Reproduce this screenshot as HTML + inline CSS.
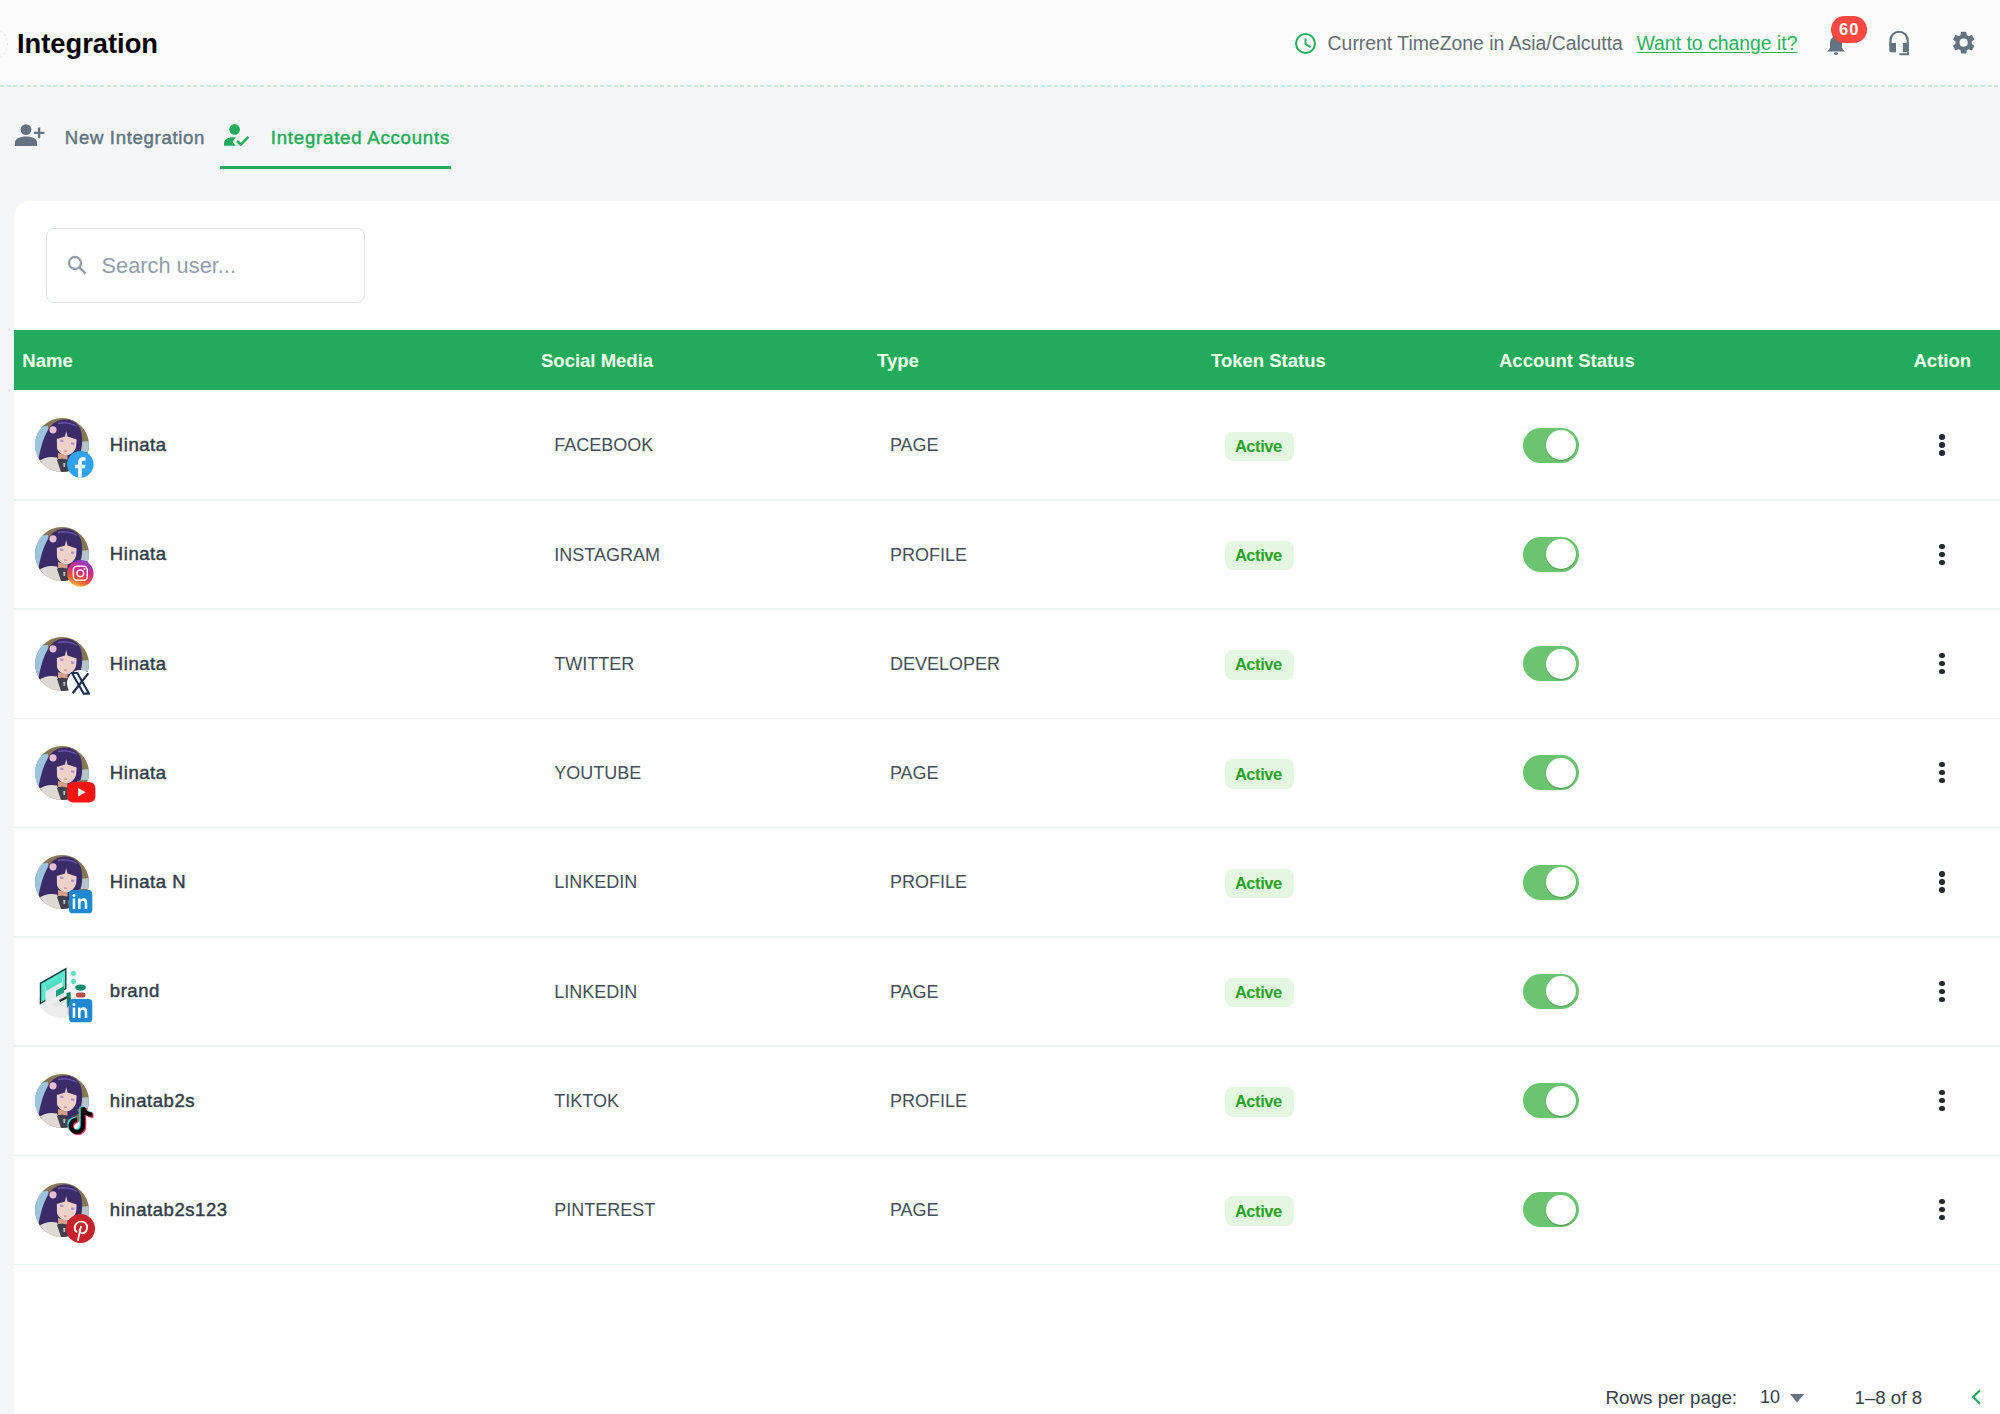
<!DOCTYPE html>
<html><head><meta charset="utf-8"><title>Integration</title>
<style>
html,body{margin:0;padding:0;}
body{width:2000px;height:1414px;overflow:hidden;position:relative;background:#f4f6f8;font-family:"Liberation Sans",sans-serif;}
.t{position:absolute;white-space:nowrap;}
.abs{position:absolute;}
svg{position:absolute;overflow:visible;}
</style></head><body>
<div class="abs" style="left:0;top:0;width:2000px;height:86px;background:#fcfcfd;"></div>
<div class="abs" style="left:0;top:85px;width:2000px;height:1.5px;background:repeating-linear-gradient(90deg,#c9ead5 0 4px,transparent 4px 6.67px);"></div>
<div class="abs" style="left:0;top:87px;width:2000px;height:1px;background:#f8f9fa;"></div>
<div class="abs" style="left:-26px;top:27px;width:32px;height:32px;border:1px dashed #e6e9ec;border-radius:50%;"></div>
<div class="t" style="left:17.00px;top:29.59px;font-size:27.3px;line-height:27.3px;font-weight:700;color:#000;">Integration</div>
<svg style="left:1295px;top:33px" width="21" height="21" viewBox="0 0 20 20"><circle cx="10" cy="10" r="9" fill="none" stroke="#2bb062" stroke-width="2"/><path d="M10 5.2V10.6L15 13.4" fill="none" stroke="#2bb062" stroke-width="1.9"/></svg>
<div class="t" style="left:1327.60px;top:33.58px;font-size:19.4px;line-height:19.4px;font-weight:400;color:#666d73;">Current TimeZone in Asia/Calcutta</div>
<div class="t" style="left:1636.50px;top:33.58px;font-size:19.4px;line-height:19.4px;font-weight:400;color:#2bb062;text-decoration:underline;text-underline-offset:2px;">Want to change it?</div>
<svg style="left:1825px;top:35px" width="22" height="21" viewBox="0 0 22 21"><path d="M11 1.5C7.4 1.5 5 4.2 5 7.8V13L2.2 16.6H19.8L17 13V7.8C17 4.2 14.6 1.5 11 1.5Z" fill="#637381"/><ellipse cx="11" cy="18.6" rx="2.2" ry="1.4" fill="#637381"/></svg>
<div class="abs" style="left:1830.8px;top:16px;width:36.7px;height:27px;border-radius:14px;background:#ff4842;"></div>
<div class="t" style="left:1839.00px;top:21.03px;font-size:16.5px;line-height:16.5px;font-weight:700;color:#fff;letter-spacing:1px;">60</div>
<svg style="left:1885px;top:28px" width="30" height="30" viewBox="0 0 30 30"><path d="M5.4 16.5V12.4A8.65 8.65 0 0 1 22.7 12.4V16.5" fill="none" stroke="#637381" stroke-width="2.2"/><path d="M4.3 15H11V24.3H6C5 24.3 4.3 23.6 4.3 22.6Z" fill="#637381"/><path d="M17.9 15H24V22.8C24 23.7 23.4 24.3 22.5 24.3H17.9Z" fill="#637381"/><path d="M23.1 24V26.2H14.4" fill="none" stroke="#637381" stroke-width="1.9"/></svg>
<svg style="left:1949.95px;top:29.4px" width="27.3" height="27.3" viewBox="0 0 24 24"><path fill="#637381" d="M19.14 12.94c.04-.3.06-.61.06-.94 0-.32-.02-.64-.07-.94l2.03-1.58a.49.49 0 0 0 .12-.61l-1.92-3.32a.49.49 0 0 0-.59-.22l-2.39.96c-.5-.38-1.03-.7-1.62-.94l-.36-2.54a.48.48 0 0 0-.48-.41h-3.84c-.24 0-.43.17-.47.41l-.36 2.54c-.59.24-1.13.57-1.62.94l-2.39-.96a.48.48 0 0 0-.59.22L2.74 8.87c-.12.21-.08.47.12.61l2.03 1.58c-.05.3-.09.63-.09.94s.02.64.07.94l-2.03 1.58a.49.49 0 0 0-.12.61l1.92 3.32c.12.22.37.29.59.22l2.39-.96c.5.38 1.03.7 1.62.94l.36 2.54c.05.24.24.41.48.41h3.84c.24 0 .44-.17.47-.41l.36-2.54c.59-.24 1.13-.56 1.62-.94l2.39.96c.22.08.47 0 .59-.22l1.92-3.32c.12-.22.07-.47-.12-.61l-2.01-1.58zM12 15.6A3.6 3.6 0 1 1 12 8.4a3.6 3.6 0 0 1 0 7.2z"/></svg>
<svg style="left:15px;top:123.5px" width="31" height="22" viewBox="0 0 31 22"><circle cx="11" cy="5.6" r="5.4" fill="#637381"/><path d="M0 22V18.5C0 14.8 4.5 12.6 11 12.6S22 14.8 22 18.5V22Z" fill="#637381"/><path d="M24.1 3.6V14M18.9 8.9H29.4" stroke="#637381" stroke-width="2.3"/></svg>
<div class="t" style="left:64.80px;top:128.76px;font-size:18.6px;line-height:18.6px;font-weight:400;color:#637381;-webkit-text-stroke:0.45px #637381;letter-spacing:0.67px;">New Integration</div>
<svg style="left:223px;top:124px" width="27" height="22" viewBox="0 0 27 22"><circle cx="11.6" cy="5.4" r="5.3" fill="#22ab5a"/><path d="M1 21.8V19.5C1 15.8 4.5 13.3 10 13.3C11 13.3 12 13.4 12.8 13.6L9.5 17.8L12.8 21.8Z" fill="#22ab5a"/><path d="M14 17L17.8 20.6L25.4 12.8" fill="none" stroke="#22ab5a" stroke-width="2.5"/></svg>
<div class="t" style="left:270.80px;top:128.76px;font-size:18.6px;line-height:18.6px;font-weight:400;color:#22ab5a;-webkit-text-stroke:0.45px #22ab5a;letter-spacing:0.78px;">Integrated Accounts</div>
<div class="abs" style="left:220px;top:166px;width:230.5px;height:3px;background:#22ab5a;"></div>
<div class="abs" style="left:14px;top:201px;width:2010px;height:1300px;background:#fff;border-radius:16px;"></div>
<div class="abs" style="left:46px;top:228px;width:317px;height:73px;border:1px solid #dde1e6;border-radius:8px;background:#fff;"></div>
<svg style="left:67px;top:255px" width="20" height="20" viewBox="0 0 20 20"><circle cx="8" cy="8" r="6" fill="none" stroke="#919eab" stroke-width="2.3"/><path d="M12.3 12.3L18.6 18.6" stroke="#919eab" stroke-width="2.6"/></svg>
<div class="t" style="left:101.50px;top:255.30px;font-size:21.8px;line-height:21.8px;font-weight:400;color:#919eab;">Search user...</div>
<div class="abs" style="left:14px;top:330px;width:1986px;height:60px;background:#22ab5a;"></div>
<div class="t" style="left:22.30px;top:351.54px;font-size:18.5px;line-height:18.5px;font-weight:700;color:#fff;">Name</div>
<div class="t" style="left:541.00px;top:351.54px;font-size:18.5px;line-height:18.5px;font-weight:700;color:#fff;">Social Media</div>
<div class="t" style="left:877.00px;top:351.54px;font-size:18.5px;line-height:18.5px;font-weight:700;color:#fff;">Type</div>
<div class="t" style="left:1211.00px;top:351.54px;font-size:18.5px;line-height:18.5px;font-weight:700;color:#fff;">Token Status</div>
<div class="t" style="left:1499.00px;top:351.54px;font-size:18.5px;line-height:18.5px;font-weight:700;color:#fff;">Account Status</div>
<div class="t" style="left:1913.50px;top:351.54px;font-size:18.5px;line-height:18.5px;font-weight:700;color:#fff;">Action</div>
<svg width="0" height="0" style="position:absolute;left:0;top:0"><defs>
<filter id="bl" x="-5%" y="-5%" width="110%" height="110%"><feGaussianBlur stdDeviation="0.45"/></filter>
<clipPath id="cc"><circle cx="27" cy="27" r="27"/></clipPath>
<linearGradient id="igg" x1="0.2" y1="1" x2="0.6" y2="0"><stop offset="0" stop-color="#fdd54f"/><stop offset="0.3" stop-color="#f5572f"/><stop offset="0.6" stop-color="#d92d7d"/><stop offset="1" stop-color="#8a3ac8"/></linearGradient>
<symbol id="av" viewBox="0 0 54 54"><g clip-path="url(#cc)">
<rect width="54" height="54" fill="#857756"/>
<path d="M0 9L13 8L12 42L0 42Z" fill="#9cc4dc"/>
<path d="M44 24L54 23V34L44 34Z" fill="#b3c4cb"/>
<path d="M3 44C5 32 8 20 13 12C17 5 23 1.5 30 1.5C39 1.5 45 7 46.5 15C47.8 23 47 30 45.5 34L40 36L36 45L20 47Z" fill="#3b2b68"/>
<path d="M23 5.5C29 4 37 5 42 8.5" stroke="#6c55aa" stroke-width="1.5" fill="none"/>
<path d="M21.8 21L30 18.5L31.2 13L32.5 18.5L41.6 21.5L41.2 28C40.5 33 36 37 31 37.8C27 37 23 34 22 30Z" fill="#eed2c9"/>
<path d="M25.2 22.6l3.2 0.2" stroke="#a98fd0" stroke-width="2.2"/>
<path d="M36 25.4l3.2 0.4" stroke="#a98fd0" stroke-width="2.2"/>
<path d="M29 33.2h2.8" stroke="#d9867e" stroke-width="1.2"/>
<path d="M23 35L32.5 37.5L32.5 41.5L23 41Z" fill="#d59f8a"/>
<path d="M0 54L3 44C8 39.5 15 38 22 39.5L27 54Z" fill="#dedad3"/>
<path d="M22 42L27 40.5L32 42L34 54H26Z" fill="#40414c"/>
<path d="M28.2 45L30.4 45L30 49L28.5 49Z" fill="#b9bdc8"/>
<path d="M33 38L41 34L44 39L36 46Z" fill="#3b2b68"/>
<circle cx="18" cy="11.8" r="3.6" fill="#e7bcd7"/>
</g></symbol>
<symbol id="brand" viewBox="0 0 54 54"><g clip-path="url(#cc)">
<rect width="54" height="54" fill="#fff"/>
<ellipse cx="25" cy="40" rx="24" ry="14" fill="#ededed"/>
<path d="M4.8 18.8L31.5 3.6V25L4.8 40.6Z" fill="#1f3b3b"/>
<path d="M6.2 19.8L30.1 6V24.2L6.2 38.2Z" fill="#58e6cf"/>
<path d="M10.5 22.5L27.5 12.8V31L10.5 38Z" fill="#e6eaea"/>
<path d="M11 21.5L27 12.5V18L11 27Z" fill="#4fdcc2"/>
<path d="M21 26.5L29 22V28.5L21 33Z" fill="#17a183"/>
<path d="M16 40L26 35L31 38L21 43Z" fill="#e0e4e4"/>
<path d="M24 36L32 32L33 34L25 38Z" fill="#232a2a"/>
<ellipse cx="38.5" cy="9.3" rx="2.5" ry="2.6" fill="#5ee0c4"/>
<ellipse cx="38.5" cy="17.5" rx="2.5" ry="2.8" fill="#5ee0c4"/>
<ellipse cx="45.5" cy="23.6" rx="5.4" ry="3.2" fill="#168a6c"/>
<rect x="41" y="28.5" width="9.4" height="5" rx="2" fill="#b8514e"/>
<path d="M31.5 29L35.5 28L36 40L32 44Z" fill="#157a62"/>
<path d="M32.5 43L35 42L35 51L33 52Z" fill="#eaa7ae"/>
</g></symbol>
</defs></svg>
<div class="abs" style="left:14px;top:499.20px;width:1986px;height:1.5px;background:#e9f5ef;"></div>
<svg style="left:34.7px;top:418.00px;filter:blur(0.35px)" width="54" height="54"><use href="#av"/></svg>
<svg style="left:67.30px;top:451.10px" width="26.6" height="26.6" viewBox="0 0 40 40"><circle cx="20" cy="20" r="20" fill="#30a2f4"/><path d="M22.2 40V26H27L27.7 20.6H22.2V17.2C22.2 15.6 22.7 14.5 25 14.5H27.9V9.7C27.4 9.6 25.7 9.5 23.8 9.5C19.6 9.5 16.8 12 16.8 16.7V20.6H12.1V26H16.8V40Z" fill="#fff"/></svg>
<div class="t" style="left:109.80px;top:436.05px;font-size:18.55px;line-height:18.55px;font-weight:400;color:#333d48;-webkit-text-stroke:0.45px #333d48;letter-spacing:0.55px;">Hinata</div>
<div class="t" style="left:554.30px;top:436.46px;font-size:18px;line-height:18px;font-weight:400;color:#454f5b;">FACEBOOK</div>
<div class="t" style="left:889.90px;top:436.46px;font-size:18px;line-height:18px;font-weight:400;color:#454f5b;">PAGE</div>
<div class="abs" style="left:1224.6px;top:431.60px;width:69px;height:29.6px;border-radius:8px;background:#e4f7e1;"></div>
<div class="t" style="left:1234.90px;top:437.93px;font-size:16.5px;line-height:16.5px;font-weight:700;color:#28a01f;letter-spacing:-0.45px;">Active</div>
<div class="abs" style="left:1523px;top:427.70px;width:56px;height:35px;border-radius:17.5px;background:#6bc46f;"></div>
<div class="abs" style="left:1546.4px;top:430.00px;width:30px;height:30px;border-radius:50%;background:#fff;box-shadow:0 1px 1px rgba(0,0,0,0.25);"></div>
<div class="abs" style="left:1939.35px;top:434.35px;width:5.3px;height:5.3px;border-radius:50%;background:#212b36;"></div>
<div class="abs" style="left:1939.35px;top:442.35px;width:5.3px;height:5.3px;border-radius:50%;background:#212b36;"></div>
<div class="abs" style="left:1939.35px;top:450.35px;width:5.3px;height:5.3px;border-radius:50%;background:#212b36;"></div>
<div class="abs" style="left:14px;top:608.45px;width:1986px;height:1.5px;background:#e9f5ef;"></div>
<svg style="left:34.7px;top:527.25px;filter:blur(0.35px)" width="54" height="54"><use href="#av"/></svg>
<svg style="left:67.30px;top:560.35px" width="26.6" height="26.6" viewBox="0 0 40 40"><circle cx="20" cy="20" r="20" fill="url(#igg)"/><rect x="9.5" y="9.5" width="21" height="21" rx="5.5" fill="none" stroke="#fff" stroke-width="2.2"/><circle cx="20" cy="20" r="5" fill="none" stroke="#fff" stroke-width="2.2"/><circle cx="26.4" cy="13.6" r="1.4" fill="#fff"/></svg>
<div class="t" style="left:109.80px;top:545.30px;font-size:18.55px;line-height:18.55px;font-weight:400;color:#333d48;-webkit-text-stroke:0.45px #333d48;letter-spacing:0.55px;">Hinata</div>
<div class="t" style="left:554.30px;top:545.71px;font-size:18px;line-height:18px;font-weight:400;color:#454f5b;">INSTAGRAM</div>
<div class="t" style="left:889.90px;top:545.71px;font-size:18px;line-height:18px;font-weight:400;color:#454f5b;">PROFILE</div>
<div class="abs" style="left:1224.6px;top:540.85px;width:69px;height:29.6px;border-radius:8px;background:#e4f7e1;"></div>
<div class="t" style="left:1234.90px;top:547.18px;font-size:16.5px;line-height:16.5px;font-weight:700;color:#28a01f;letter-spacing:-0.45px;">Active</div>
<div class="abs" style="left:1523px;top:536.95px;width:56px;height:35px;border-radius:17.5px;background:#6bc46f;"></div>
<div class="abs" style="left:1546.4px;top:539.25px;width:30px;height:30px;border-radius:50%;background:#fff;box-shadow:0 1px 1px rgba(0,0,0,0.25);"></div>
<div class="abs" style="left:1939.35px;top:543.60px;width:5.3px;height:5.3px;border-radius:50%;background:#212b36;"></div>
<div class="abs" style="left:1939.35px;top:551.60px;width:5.3px;height:5.3px;border-radius:50%;background:#212b36;"></div>
<div class="abs" style="left:1939.35px;top:559.60px;width:5.3px;height:5.3px;border-radius:50%;background:#212b36;"></div>
<div class="abs" style="left:14px;top:717.70px;width:1986px;height:1.5px;background:#e9f5ef;"></div>
<svg style="left:34.7px;top:636.50px;filter:blur(0.35px)" width="54" height="54"><use href="#av"/></svg>
<svg style="left:67.10px;top:669.60px" width="26.6" height="26.6" viewBox="0 0 40 40"><circle cx="20" cy="20" r="20" fill="#fff"/><path d="M7.5 4.5H15.5L33 35.5H25Z" fill="none" stroke="#1d2f52" stroke-width="3.2" stroke-linejoin="round"/><path d="M32 5L8.5 35" stroke="#1d2f52" stroke-width="3.4"/></svg>
<div class="t" style="left:109.80px;top:654.55px;font-size:18.55px;line-height:18.55px;font-weight:400;color:#333d48;-webkit-text-stroke:0.45px #333d48;letter-spacing:0.55px;">Hinata</div>
<div class="t" style="left:554.30px;top:654.96px;font-size:18px;line-height:18px;font-weight:400;color:#454f5b;">TWITTER</div>
<div class="t" style="left:889.90px;top:654.96px;font-size:18px;line-height:18px;font-weight:400;color:#454f5b;">DEVELOPER</div>
<div class="abs" style="left:1224.6px;top:650.10px;width:69px;height:29.6px;border-radius:8px;background:#e4f7e1;"></div>
<div class="t" style="left:1234.90px;top:656.43px;font-size:16.5px;line-height:16.5px;font-weight:700;color:#28a01f;letter-spacing:-0.45px;">Active</div>
<div class="abs" style="left:1523px;top:646.20px;width:56px;height:35px;border-radius:17.5px;background:#6bc46f;"></div>
<div class="abs" style="left:1546.4px;top:648.50px;width:30px;height:30px;border-radius:50%;background:#fff;box-shadow:0 1px 1px rgba(0,0,0,0.25);"></div>
<div class="abs" style="left:1939.35px;top:652.85px;width:5.3px;height:5.3px;border-radius:50%;background:#212b36;"></div>
<div class="abs" style="left:1939.35px;top:660.85px;width:5.3px;height:5.3px;border-radius:50%;background:#212b36;"></div>
<div class="abs" style="left:1939.35px;top:668.85px;width:5.3px;height:5.3px;border-radius:50%;background:#212b36;"></div>
<div class="abs" style="left:14px;top:826.95px;width:1986px;height:1.5px;background:#e9f5ef;"></div>
<svg style="left:34.7px;top:745.75px;filter:blur(0.35px)" width="54" height="54"><use href="#av"/></svg>
<svg style="left:66.90px;top:781.75px" width="28.4" height="20.6" viewBox="0 0 28.4 20.6"><rect width="28.4" height="20.6" rx="6" fill="#f7130f"/><path d="M11.2 6V14.6L18.6 10.3Z" fill="#fff"/></svg>
<div class="t" style="left:109.80px;top:763.80px;font-size:18.55px;line-height:18.55px;font-weight:400;color:#333d48;-webkit-text-stroke:0.45px #333d48;letter-spacing:0.55px;">Hinata</div>
<div class="t" style="left:554.30px;top:764.21px;font-size:18px;line-height:18px;font-weight:400;color:#454f5b;">YOUTUBE</div>
<div class="t" style="left:889.90px;top:764.21px;font-size:18px;line-height:18px;font-weight:400;color:#454f5b;">PAGE</div>
<div class="abs" style="left:1224.6px;top:759.35px;width:69px;height:29.6px;border-radius:8px;background:#e4f7e1;"></div>
<div class="t" style="left:1234.90px;top:765.68px;font-size:16.5px;line-height:16.5px;font-weight:700;color:#28a01f;letter-spacing:-0.45px;">Active</div>
<div class="abs" style="left:1523px;top:755.45px;width:56px;height:35px;border-radius:17.5px;background:#6bc46f;"></div>
<div class="abs" style="left:1546.4px;top:757.75px;width:30px;height:30px;border-radius:50%;background:#fff;box-shadow:0 1px 1px rgba(0,0,0,0.25);"></div>
<div class="abs" style="left:1939.35px;top:762.10px;width:5.3px;height:5.3px;border-radius:50%;background:#212b36;"></div>
<div class="abs" style="left:1939.35px;top:770.10px;width:5.3px;height:5.3px;border-radius:50%;background:#212b36;"></div>
<div class="abs" style="left:1939.35px;top:778.10px;width:5.3px;height:5.3px;border-radius:50%;background:#212b36;"></div>
<div class="abs" style="left:14px;top:936.20px;width:1986px;height:1.5px;background:#e9f5ef;"></div>
<svg style="left:34.7px;top:855.00px;filter:blur(0.35px)" width="54" height="54"><use href="#av"/></svg>
<svg style="left:68.75px;top:889.90px" width="23.3" height="23.3" viewBox="0 0 24 24"><rect width="24" height="24" rx="4" fill="#1f88d3"/><rect x="3.8" y="8.8" width="2.6" height="10.8" fill="#fff"/><circle cx="5.1" cy="5.6" r="1.5" fill="#fff"/><path d="M9.3 8.8H11.8V10.3C12.5 9.1 13.7 8.6 15 8.6C17.8 8.6 18.8 10.4 18.8 13.2V19.6H16.2V13.8C16.2 12.2 15.8 11 14.2 11C12.6 11 11.9 12.2 11.9 13.9V19.6H9.3Z" fill="#fff"/></svg>
<div class="t" style="left:109.80px;top:873.05px;font-size:18.55px;line-height:18.55px;font-weight:400;color:#333d48;-webkit-text-stroke:0.45px #333d48;letter-spacing:0.55px;">Hinata N</div>
<div class="t" style="left:554.30px;top:873.46px;font-size:18px;line-height:18px;font-weight:400;color:#454f5b;">LINKEDIN</div>
<div class="t" style="left:889.90px;top:873.46px;font-size:18px;line-height:18px;font-weight:400;color:#454f5b;">PROFILE</div>
<div class="abs" style="left:1224.6px;top:868.60px;width:69px;height:29.6px;border-radius:8px;background:#e4f7e1;"></div>
<div class="t" style="left:1234.90px;top:874.93px;font-size:16.5px;line-height:16.5px;font-weight:700;color:#28a01f;letter-spacing:-0.45px;">Active</div>
<div class="abs" style="left:1523px;top:864.70px;width:56px;height:35px;border-radius:17.5px;background:#6bc46f;"></div>
<div class="abs" style="left:1546.4px;top:867.00px;width:30px;height:30px;border-radius:50%;background:#fff;box-shadow:0 1px 1px rgba(0,0,0,0.25);"></div>
<div class="abs" style="left:1939.35px;top:871.35px;width:5.3px;height:5.3px;border-radius:50%;background:#212b36;"></div>
<div class="abs" style="left:1939.35px;top:879.35px;width:5.3px;height:5.3px;border-radius:50%;background:#212b36;"></div>
<div class="abs" style="left:1939.35px;top:887.35px;width:5.3px;height:5.3px;border-radius:50%;background:#212b36;"></div>
<div class="abs" style="left:14px;top:1045.45px;width:1986px;height:1.5px;background:#e9f5ef;"></div>
<svg style="left:34.7px;top:964.25px;filter:blur(0.35px)" width="54" height="54"><use href="#brand"/></svg>
<svg style="left:68.75px;top:999.15px" width="23.3" height="23.3" viewBox="0 0 24 24"><rect width="24" height="24" rx="4" fill="#1f88d3"/><rect x="3.8" y="8.8" width="2.6" height="10.8" fill="#fff"/><circle cx="5.1" cy="5.6" r="1.5" fill="#fff"/><path d="M9.3 8.8H11.8V10.3C12.5 9.1 13.7 8.6 15 8.6C17.8 8.6 18.8 10.4 18.8 13.2V19.6H16.2V13.8C16.2 12.2 15.8 11 14.2 11C12.6 11 11.9 12.2 11.9 13.9V19.6H9.3Z" fill="#fff"/></svg>
<div class="t" style="left:109.80px;top:982.30px;font-size:18.55px;line-height:18.55px;font-weight:400;color:#333d48;-webkit-text-stroke:0.45px #333d48;letter-spacing:0.55px;">brand</div>
<div class="t" style="left:554.30px;top:982.71px;font-size:18px;line-height:18px;font-weight:400;color:#454f5b;">LINKEDIN</div>
<div class="t" style="left:889.90px;top:982.71px;font-size:18px;line-height:18px;font-weight:400;color:#454f5b;">PAGE</div>
<div class="abs" style="left:1224.6px;top:977.85px;width:69px;height:29.6px;border-radius:8px;background:#e4f7e1;"></div>
<div class="t" style="left:1234.90px;top:984.18px;font-size:16.5px;line-height:16.5px;font-weight:700;color:#28a01f;letter-spacing:-0.45px;">Active</div>
<div class="abs" style="left:1523px;top:973.95px;width:56px;height:35px;border-radius:17.5px;background:#6bc46f;"></div>
<div class="abs" style="left:1546.4px;top:976.25px;width:30px;height:30px;border-radius:50%;background:#fff;box-shadow:0 1px 1px rgba(0,0,0,0.25);"></div>
<div class="abs" style="left:1939.35px;top:980.60px;width:5.3px;height:5.3px;border-radius:50%;background:#212b36;"></div>
<div class="abs" style="left:1939.35px;top:988.60px;width:5.3px;height:5.3px;border-radius:50%;background:#212b36;"></div>
<div class="abs" style="left:1939.35px;top:996.60px;width:5.3px;height:5.3px;border-radius:50%;background:#212b36;"></div>
<div class="abs" style="left:14px;top:1154.70px;width:1986px;height:1.5px;background:#e9f5ef;"></div>
<svg style="left:34.7px;top:1073.50px;filter:blur(0.35px)" width="54" height="54"><use href="#av"/></svg>
<svg style="left:65.50px;top:1104.10px" width="29.5" height="30.4" viewBox="0 0 28 28"><circle cx="10.2" cy="20.3" r="4" fill="#fff"/><g fill="none" stroke-width="4.2" stroke-linejoin="round"><g transform="translate(-1.1 -0.9)" stroke="#25f4ee"><path d="M16 3V20A5.8 5.8 0 1 1 10.2 14.5"/><path d="M16 3Q17.5 9.5 25 9.8"/></g><g transform="translate(1.1 0.9)" stroke="#fe2c55"><path d="M16 3V20A5.8 5.8 0 1 1 10.2 14.5"/><path d="M16 3Q17.5 9.5 25 9.8"/></g><g stroke="#000"><path d="M16 3V20A5.8 5.8 0 1 1 10.2 14.5"/><path d="M16 3Q17.5 9.5 25 9.8"/></g></g></svg>
<div class="t" style="left:109.80px;top:1091.55px;font-size:18.55px;line-height:18.55px;font-weight:400;color:#333d48;-webkit-text-stroke:0.45px #333d48;letter-spacing:0.55px;">hinatab2s</div>
<div class="t" style="left:554.30px;top:1091.96px;font-size:18px;line-height:18px;font-weight:400;color:#454f5b;">TIKTOK</div>
<div class="t" style="left:889.90px;top:1091.96px;font-size:18px;line-height:18px;font-weight:400;color:#454f5b;">PROFILE</div>
<div class="abs" style="left:1224.6px;top:1087.10px;width:69px;height:29.6px;border-radius:8px;background:#e4f7e1;"></div>
<div class="t" style="left:1234.90px;top:1093.43px;font-size:16.5px;line-height:16.5px;font-weight:700;color:#28a01f;letter-spacing:-0.45px;">Active</div>
<div class="abs" style="left:1523px;top:1083.20px;width:56px;height:35px;border-radius:17.5px;background:#6bc46f;"></div>
<div class="abs" style="left:1546.4px;top:1085.50px;width:30px;height:30px;border-radius:50%;background:#fff;box-shadow:0 1px 1px rgba(0,0,0,0.25);"></div>
<div class="abs" style="left:1939.35px;top:1089.85px;width:5.3px;height:5.3px;border-radius:50%;background:#212b36;"></div>
<div class="abs" style="left:1939.35px;top:1097.85px;width:5.3px;height:5.3px;border-radius:50%;background:#212b36;"></div>
<div class="abs" style="left:1939.35px;top:1105.85px;width:5.3px;height:5.3px;border-radius:50%;background:#212b36;"></div>
<div class="abs" style="left:14px;top:1263.95px;width:1986px;height:1.5px;background:#e9f5ef;"></div>
<svg style="left:34.7px;top:1182.75px;filter:blur(0.35px)" width="54" height="54"><use href="#av"/></svg>
<svg style="left:66.25px;top:1214.35px" width="29" height="29" viewBox="0 0 40 40"><circle cx="20" cy="20" r="20" fill="#c8232c"/><path d="M14.5 24.5C12.6 23.2 12 21.2 12 19C12 14 16 10.5 21 10.5C25.8 10.5 29 13.8 29 18.2C29 23 26.4 26.6 22.2 26.6C19.6 26.6 18 24.5 19 21.5" fill="none" stroke="#fff" stroke-width="2.6" stroke-linecap="round"/><path d="M20.6 17.5L16.5 36" stroke="#fff" stroke-width="2.4" stroke-linecap="round"/></svg>
<div class="t" style="left:109.80px;top:1200.80px;font-size:18.55px;line-height:18.55px;font-weight:400;color:#333d48;-webkit-text-stroke:0.45px #333d48;letter-spacing:0.55px;">hinatab2s123</div>
<div class="t" style="left:554.30px;top:1201.21px;font-size:18px;line-height:18px;font-weight:400;color:#454f5b;">PINTEREST</div>
<div class="t" style="left:889.90px;top:1201.21px;font-size:18px;line-height:18px;font-weight:400;color:#454f5b;">PAGE</div>
<div class="abs" style="left:1224.6px;top:1196.35px;width:69px;height:29.6px;border-radius:8px;background:#e4f7e1;"></div>
<div class="t" style="left:1234.90px;top:1202.68px;font-size:16.5px;line-height:16.5px;font-weight:700;color:#28a01f;letter-spacing:-0.45px;">Active</div>
<div class="abs" style="left:1523px;top:1192.45px;width:56px;height:35px;border-radius:17.5px;background:#6bc46f;"></div>
<div class="abs" style="left:1546.4px;top:1194.75px;width:30px;height:30px;border-radius:50%;background:#fff;box-shadow:0 1px 1px rgba(0,0,0,0.25);"></div>
<div class="abs" style="left:1939.35px;top:1199.10px;width:5.3px;height:5.3px;border-radius:50%;background:#212b36;"></div>
<div class="abs" style="left:1939.35px;top:1207.10px;width:5.3px;height:5.3px;border-radius:50%;background:#212b36;"></div>
<div class="abs" style="left:1939.35px;top:1215.10px;width:5.3px;height:5.3px;border-radius:50%;background:#212b36;"></div>
<div class="t" style="left:1605.50px;top:1388.59px;font-size:18.8px;line-height:18.8px;font-weight:400;color:#36404b;">Rows per page:</div>
<div class="t" style="left:1760.00px;top:1387.76px;font-size:18px;line-height:18px;font-weight:400;color:#36404b;">10</div>
<svg style="left:1790px;top:1394px" width="14" height="9" viewBox="0 0 14 9"><path d="M0 0H14L7 8.5Z" fill="#637381"/></svg>
<div class="t" style="left:1854.50px;top:1388.67px;font-size:18.7px;line-height:18.7px;font-weight:400;color:#36404b;">1–8 of 8</div>
<svg style="left:1970px;top:1388px" width="12" height="18" viewBox="0 0 12 18"><path d="M10 2.2L3.2 9L10 15.8" fill="none" stroke="#22ab5a" stroke-width="2.2"/></svg>
</body></html>
